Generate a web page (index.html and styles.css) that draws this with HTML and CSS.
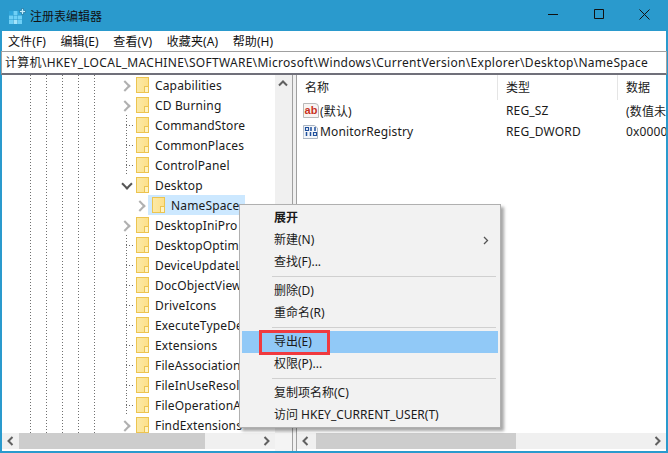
FILE: index.html
```html
<!DOCTYPE html>
<html lang="zh-CN">
<head>
<meta charset="utf-8">
<title>注册表编辑器</title>
<link rel="stylesheet" href="styles.css">
</head>
<body>
<div class="window">
  <header class="titlebar">
    <svg class="app-icon" width="17" height="16" viewBox="0 0 17 16">
      <g fill="#6fd0f6"><rect x="0" y="3" width="4" height="4" fill="#2fa6dc"/><rect x="4.500" y="3" width="4" height="4"/><rect x="9" y="3" width="4" height="4" fill="#2fa6dc"/><rect x="0" y="7.500" width="4" height="4"/><rect x="4.500" y="7.500" width="4" height="4"/><rect x="9" y="7.500" width="4" height="4"/><rect x="0" y="12" width="4" height="4"/><rect x="4.500" y="12" width="4" height="4" fill="#a5e4fa"/><rect x="9" y="12" width="4" height="4"/></g>
      <path d="M12.500 0.500h2v2h2v2h-2v2h-2v-2h-2v-2h2z" fill="#c4ecfb" stroke="#17739f" stroke-width=".7"/>
    </svg>
    <span class="title">注册表编辑器</span>
    <div class="controls">
      <svg width="11" height="11" viewBox="0 0 11 11"><path d="M0 5.500h10" stroke="#111" fill="none"/></svg>
      <svg width="11" height="11" viewBox="0 0 11 11"><path d="M0.500 0.500h9v9h-9z" stroke="#111" fill="none"/></svg>
      <svg width="11" height="11" viewBox="0 0 11 11"><path d="M0.500 0.500l10 10M10.500 0.500l-10 10" stroke="#111" fill="none"/></svg>
    </div>
  </header>
  <nav class="menubar">
    <span>文件(F)</span><span>编辑(E)</span><span>查看(V)</span><span>收藏夹(A)</span><span>帮助(H)</span>
  </nav>
  <div class="address">计算机\HKEY_LOCAL_MACHINE\SOFTWARE\Microsoft\Windows\CurrentVersion\Explorer\Desktop\NameSpace</div>
  <main class="panes">
    <section class="left">
      <div class="left-top">
        <div class="tree">
          <div class="guides"><i></i><i></i><i></i><i></i><i></i></div>
          <div class="rows">
            <div class="row"><span class="chev"></span><span class="folder"></span><span>Capabilities</span></div>
            <div class="row"><span class="chev"></span><span class="folder"></span><span>CD Burning</span></div>
            <div class="row"><span class="dash"></span><span class="folder"></span><span>CommandStore</span></div>
            <div class="row"><span class="dash"></span><span class="folder"></span><span>CommonPlaces</span></div>
            <div class="row"><span class="dash"></span><span class="folder"></span><span>ControlPanel</span></div>
            <div class="row"><span class="chev open"></span><span class="folder"></span><span>Desktop</span></div>
            <div class="row child"><span class="chev"></span><span class="sel"><span class="folder"></span><span>NameSpace</span></span></div>
            <div class="row"><span class="chev"></span><span class="folder"></span><span>DesktopIniPro</span></div>
            <div class="row"><span class="dash"></span><span class="folder"></span><span>DesktopOptim</span></div>
            <div class="row"><span class="dash"></span><span class="folder"></span><span>DeviceUpdateL</span></div>
            <div class="row"><span class="dash"></span><span class="folder"></span><span>DocObjectView</span></div>
            <div class="row"><span class="dash"></span><span class="folder"></span><span>DriveIcons</span></div>
            <div class="row"><span class="dash"></span><span class="folder"></span><span>ExecuteTypeDe</span></div>
            <div class="row"><span class="dash"></span><span class="folder"></span><span>Extensions</span></div>
            <div class="row"><span class="dash"></span><span class="folder"></span><span>FileAssociation</span></div>
            <div class="row"><span class="dash"></span><span class="folder"></span><span>FileInUseResol</span></div>
            <div class="row"><span class="dash"></span><span class="folder"></span><span>FileOperationA</span></div>
            <div class="row"><span class="chev"></span><span class="folder"></span><span>FindExtensions</span></div>
          </div>
        </div>
        <div class="vscroll">
          <svg width="17" height="17" viewBox="0 0 17 17"><path d="M4 10.500l4-4 4 4" stroke="#606060" stroke-width="2" fill="none"/></svg>
        </div>
      </div>
      <div class="bottom">
        <div class="hscroll">
          <svg width="17" height="16" viewBox="0 0 17 16"><path d="M10.500 4l-4 4 4 4" stroke="#606060" stroke-width="2" fill="none"/></svg>
          <div class="thumb thumb-left"></div>
          <svg width="17" height="16" viewBox="0 0 17 16"><path d="M6.500 4l4 4-4 4" stroke="#606060" stroke-width="2" fill="none"/></svg>
        </div>
        <div class="corner"></div>
      </div>
    </section>
    <div class="splitter"></div>
    <section class="right">
      <div class="right-top">
        <div class="cols">
          <div class="col c-name">名称</div>
          <div class="col c-type">类型</div>
          <div class="col c-data">数据</div>
        </div>
        <div class="vrow">
          <div class="c-name cell"><span class="ico ab">ab</span><span>(默认)</span></div>
          <div class="c-type cell">REG_SZ</div>
          <div class="c-data cell">(数值未设置)</div>
        </div>
        <div class="vrow">
          <div class="c-name cell"><svg class="ico" width="16" height="15" viewBox="0 0 16 15"><path d="M0.500 1.500h11l3 2.500v10.500h-14.500z" fill="#f3f6fa" stroke="#a9b4c2"/><path d="M2.500 3.500h3v3h-3zM10.500 8.500h3v3h-3z" fill="none" stroke="#1f4f9c" stroke-width="1.200"/><path d="M8 3v4M12 3v4M3.500 8v4M7.500 8v4" stroke="#1f4f9c" stroke-width="1.500"/></svg><span>MonitorRegistry</span></div>
          <div class="c-type cell">REG_DWORD</div>
          <div class="c-data cell">0x00000000</div>
        </div>
      </div>
      <div class="hscroll">
        <svg width="17" height="16" viewBox="0 0 17 16"><path d="M10.500 4l-4 4 4 4" stroke="#606060" stroke-width="2" fill="none"/></svg>
        <div class="thumb thumb-right"></div>
        <svg width="17" height="16" viewBox="0 0 17 16"><path d="M6.500 4l4 4-4 4" stroke="#606060" stroke-width="2" fill="none"/></svg>
      </div>
    </section>
  </main>
  <div class="menu">
    <div class="item strong">展开</div>
    <div class="item">新建(N)<svg class="sub" width="6" height="9" viewBox="0 0 6 9"><path d="M1 1l3.500 3.500L1 8" stroke="#555" stroke-width="1.300" fill="none"/></svg></div>
    <div class="item">查找(F)...</div>
    <hr>
    <div class="item">删除(D)</div>
    <div class="item">重命名(R)</div>
    <hr>
    <div class="item hot">导出(E)<span class="mark"></span></div>
    <div class="item">权限(P)...</div>
    <hr>
    <div class="item">复制项名称(C)</div>
    <div class="item">访问 HKEY_CURRENT_USER(T)</div>
  </div>
</div>
</body>
</html>
```
FILE: styles.css
```css
* { box-sizing: border-box; }
html, body { margin: 0; height: 100%; }
body {
  font-family: "Noto Sans", "Noto Sans CJK SC", sans-serif;
  font-size: 12px;
  color: #1a1a1a;
  overflow: hidden;
}
.window {
  position: relative;
  width: 668px;
  height: 453px;
  display: flex;
  flex-direction: column;
  background: #fff;
  border: 1px solid #2a9acd;
  border-width: 0 2px 2px;
}
.titlebar {
  height: 31px;
  flex: none;
  display: flex;
  align-items: center;
  background: #2a9acd;
  margin: 0 -2px;
  padding: 0 0 0 9px;
}
.app-icon { flex: none; margin-right: 4px; }
.title { color: #111; flex: 1; }
.controls { display: flex; gap: 34.500px; padding-right: 18px; margin-top: -2px; }
.menubar {
  height: 20px;
  flex: none;
  display: flex;
  align-items: center;
  gap: 14.500px;
  padding-left: 6px;
  color: #111;
}
.menubar span { letter-spacing: .1px; }
.address {
  height: 24px;
  flex: none;
  line-height: 22px;
  padding-left: 3px;
  border: 1px solid #a0a0a0;
  border-bottom: 2px solid #70707a;
  margin: 0 -1px;
  white-space: nowrap;
  overflow: hidden;
  letter-spacing: .3px;
}
.panes { flex: 1; display: flex; min-height: 0; }
.left { width: 290px; flex: none; display: flex; flex-direction: column; }
.left-top { flex: 1; display: flex; min-height: 0; }
.tree { position: relative; flex: 1; overflow: hidden; }
.guides { position: absolute; inset: 0 auto 0 28px; display: flex; gap: 15px; }
.guides i { width: 1px; background: repeating-linear-gradient(#707070 0 1px, transparent 1px 3px); }
.rows { padding: 0 0 0 118px; letter-spacing: .15px; }
.row {
  height: 20px;
  display: flex;
  align-items: center;
  position: relative;
  white-space: nowrap;
}
.chev, .dash { width: 16px; height: 20px; flex: none; position: relative; }
.chev::after {
  content: "";
  position: absolute;
  left: 1px;
  top: 7px;
  width: 6px;
  height: 6px;
  border: solid #b0b0b0;
  border-width: 2px 2px 0 0;
  transform: rotate(45deg);
}
.chev.open::after {
  left: 3px;
  top: 5px;
  border-color: #555;
  transform: rotate(135deg);
}
.dash {
  background:
    repeating-linear-gradient(#707070 0 1px, transparent 1px 3px) 6px 0 / 1px 100% no-repeat,
    repeating-linear-gradient(90deg, #707070 0 1px, transparent 1px 3px) 6px 10px / 9px 1px no-repeat;
}
.folder {
  width: 13px;
  height: 16px;
  flex: none;
  margin-right: 6px;
  background: linear-gradient(90deg, #fbe9a6, #fde08a);
  border: 1px solid #ecc451;
  position: relative;
}
.folder::after {
  content: "";
  position: absolute;
  right: -1px;
  bottom: -1px;
  width: 3px;
  height: 5px;
  border: 1px solid #ecc451;
  background: #fff3c4;
}
.child { padding-left: 15px; }
.sel {
  display: flex;
  align-items: center;
  height: 20px;
  width: 97px;
  background: #cce8ff;
  padding-left: 4px;
  margin-left: -3px;
}
.vscroll { width: 17px; flex: none; background: #f0f0f0; }
.vscroll svg { display: block; }
.bottom { display: flex; height: 18px; flex: none; }
.corner { width: 17px; flex: none; background: #f4f4f4; }
.hscroll {
  height: 16px;
  flex: 1;
  display: flex;
  background: #f0f0f0;
}
.right .hscroll { flex: none; margin-bottom: 2px; }
.hscroll svg { flex: none; }
.thumb { height: 16px; background: #cdcdcd; }
.thumb-left { width: 186px; margin-right: auto; }
.thumb-right { width: 200px; margin: 0 auto 0 2px; }
.splitter {
  width: 5px;
  flex: none;
  background: #f0f0f0;
  border: solid #a0a0a0;
  border-width: 0 1px;
}
.right { flex: 1; min-width: 0; display: flex; flex-direction: column; }
.right-top { flex: 1; overflow: hidden; }
.cols { display: flex; height: 25px; }
.col {
  height: 25px;
  line-height: 25px;
  border-right: 1px solid #e5e5e5;
  padding-left: 8px;
}
.c-name { width: 201px; flex: none; }
.c-type { width: 120px; flex: none; }
.c-data { flex: 1; border-right: 0; white-space: nowrap; overflow: hidden; }
.vrow { display: flex; height: 21px; align-items: center; }
.cell { padding-left: 8px; display: flex; align-items: center; white-space: nowrap; letter-spacing: .15px; }
.c-name.cell { padding-left: 6px; }
.ico { width: 16px; height: 15px; flex: none; margin-right: 1px; }
.ab {
  font: bold 11px/13px "Liberation Sans", sans-serif;
  letter-spacing: 0;
  color: #c8321e;
  text-align: center;
  background: #f8f4f2;
  border: 1px solid #b9b9b9;
  border-top-right-radius: 4px;
}
.menu {
  position: absolute;
  left: 237px;
  top: 204px;
  width: 262px;
  height: 224px;
  padding: 2px;
  background: #f2f2f2;
  border: 1px solid #b0b0b0;
  box-shadow: 3px 3px 3px rgba(0,0,0,.35);
}
.item {
  position: relative;
  height: 22px;
  line-height: 22px;
  padding-left: 32px;
  color: #1a1a1a;
}
.strong { font-weight: 700; }
.hot { background: #91c9f7; }
.sub { position: absolute; right: 9px; top: 7px; }
.menu hr {
  margin: 3px 2px 3px 30px;
  border: 0;
  height: 1px;
  background: #d0d0d0;
}
.mark {
  position: absolute;
  left: 17px;
  top: -1px;
  width: 71px;
  height: 25px;
  border: 3px solid #f03a3f;
}
```
